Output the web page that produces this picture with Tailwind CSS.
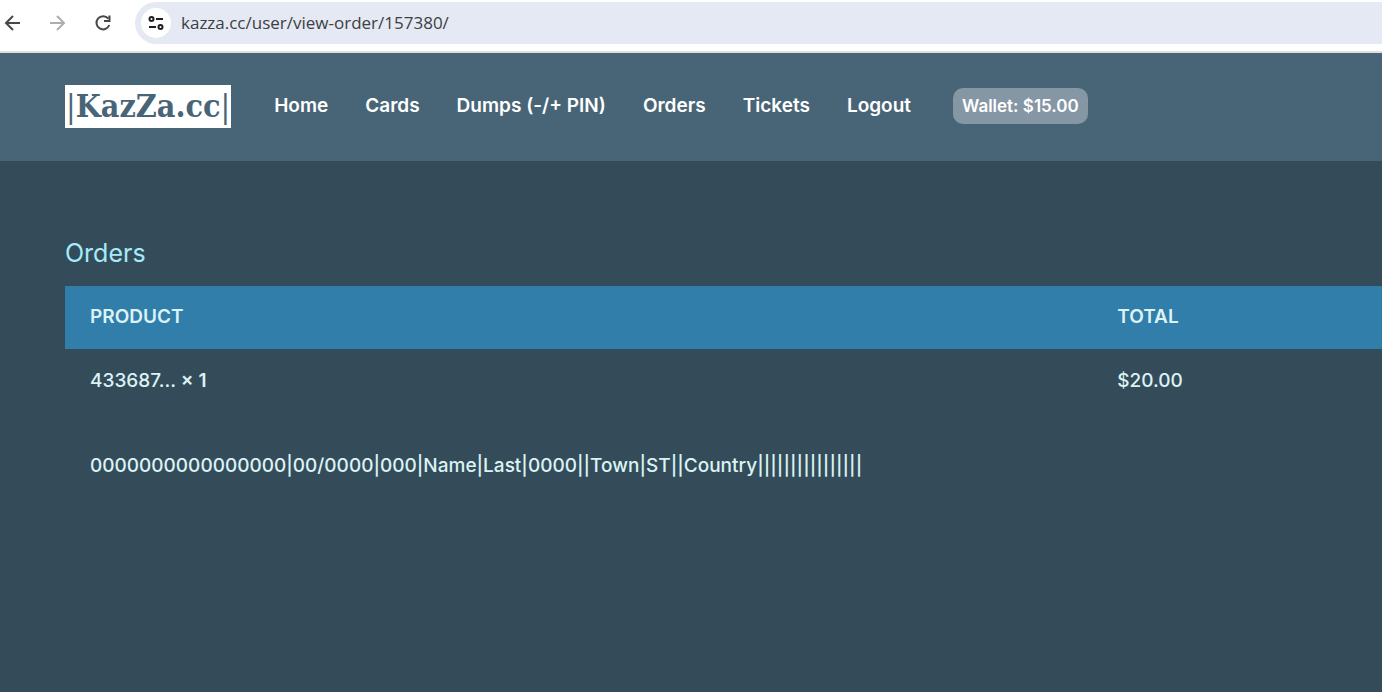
<!DOCTYPE html>
<html lang="en">
<head>
<meta charset="utf-8">
<meta name="viewport" content="width=device-width, initial-scale=1">
<title>Orders</title>
<script src="https://cdn.jsdelivr.net/npm/@tailwindcss/browser@4"></script>
</head>
<body class="min-h-screen overflow-x-hidden bg-[#344c59] font-['Inter',sans-serif] text-[19px] leading-7 text-[#dcf3f6]">
  <!-- Browser toolbar -->
  <div class="flex h-[53px] items-start border-b-2 border-[#dfe1e1] bg-white pt-[2px]">
    <div class="flex h-[42px] w-[135px] shrink-0 items-center gap-[25px] pl-[3px] text-[#474747]">
      <button type="button" aria-label="Back"><svg class="size-5" viewBox="0 0 20 20" fill="none" stroke="currentColor" stroke-width="2"><path d="M17 10H3.500M10 3L3 10l7 7"/></svg></button>
      <button type="button" aria-label="Forward" class="text-[#adadad]"><svg class="size-5" viewBox="0 0 20 20" fill="none" stroke="currentColor" stroke-width="2"><path d="M2 10h13.500M9 3l7 7-7 7"/></svg></button>
      <button type="button" aria-label="Reload"><svg class="size-5" viewBox="0 0 20 20" fill="none" stroke="currentColor" stroke-width="2"><path d="M15.300 5.700A6.600 6.600 0 1 0 16.300 12M16.500 2.500v5.500H11"/></svg></button>
    </div>
    <div class="flex h-[42px] min-w-0 flex-1 items-center gap-[10px] rounded-l-full bg-[#e5e9f3] pl-[6px]">
      <button type="button" aria-label="View site information" class="flex size-[30px] shrink-0 items-center justify-center rounded-full bg-white text-[#1f1f1f]">
        <svg class="size-[18px]" viewBox="0 0 18 18" fill="none" stroke="currentColor" stroke-width="2"><circle cx="4.500" cy="5" r="2"/><path d="M9 5h7M2 13h7"/><circle cx="13.500" cy="13" r="2"/></svg>
      </button>
      <input type="text" aria-label="Address" value="kazza.cc/user/view-order/157380/" class="min-w-0 flex-1 bg-transparent font-['Open_Sans',sans-serif] text-[17px] text-[#3c4043] outline-none">
    </div>
  </div>

  <!-- Site header -->
  <header class="flex h-[108px] items-center bg-[#486577] pb-[2px] pl-[65px] font-semibold text-white">
    <a href="#" class="mr-[43px] flex h-[43px] shrink-0 items-center bg-white px-px font-['DejaVu_Serif_Condensed','DejaVu_Serif',serif] text-[32px] font-bold text-[#486577]"><span class="font-normal">|</span>KazZa.cc<span class="font-normal">|</span></a>
    <nav class="flex items-center gap-[37px] whitespace-nowrap">
      <a href="#">Home</a>
      <a href="#">Cards</a>
      <a href="#">Dumps (-/+ PIN)</a>
      <a href="#">Orders</a>
      <a href="#">Tickets</a>
      <a href="#">Logout</a>
    </nav>
    <a href="#" class="ml-[42px] whitespace-nowrap rounded-[10px] bg-[#8597a5] px-[9px] py-1 text-[17px]">Wallet: $15.00</a>
  </header>

  <!-- Order details -->
  <main class="pl-[65px] pt-[75px]">
    <h1 class="mb-[15px] text-[25px] leading-[35px] text-[#a5ebfb]">Orders</h1>
    <table class="w-full table-fixed text-left font-medium">
      <thead class="bg-[#327eaa]">
        <tr class="h-[63px]">
          <th scope="col" class="w-[78%] pb-[2px] pl-[25px] font-semibold">PRODUCT</th>
          <th scope="col" class="pb-[2px] pl-[25px] font-semibold">TOTAL</th>
        </tr>
      </thead>
      <tbody>
        <tr class="h-[63px]">
          <td class="pl-[25px]">433687... <strong class="font-semibold">× 1</strong></td>
          <td class="pl-[25px]">$20.00</td>
        </tr>
        <tr class="h-[107px]">
          <td colspan="2" class="pl-[25px]">0000000000000000|00/0000|000|Name|Last|0000||Town|ST||Country||||||||||||||||</td>
        </tr>
      </tbody>
    </table>
  </main>
</body>
</html>
